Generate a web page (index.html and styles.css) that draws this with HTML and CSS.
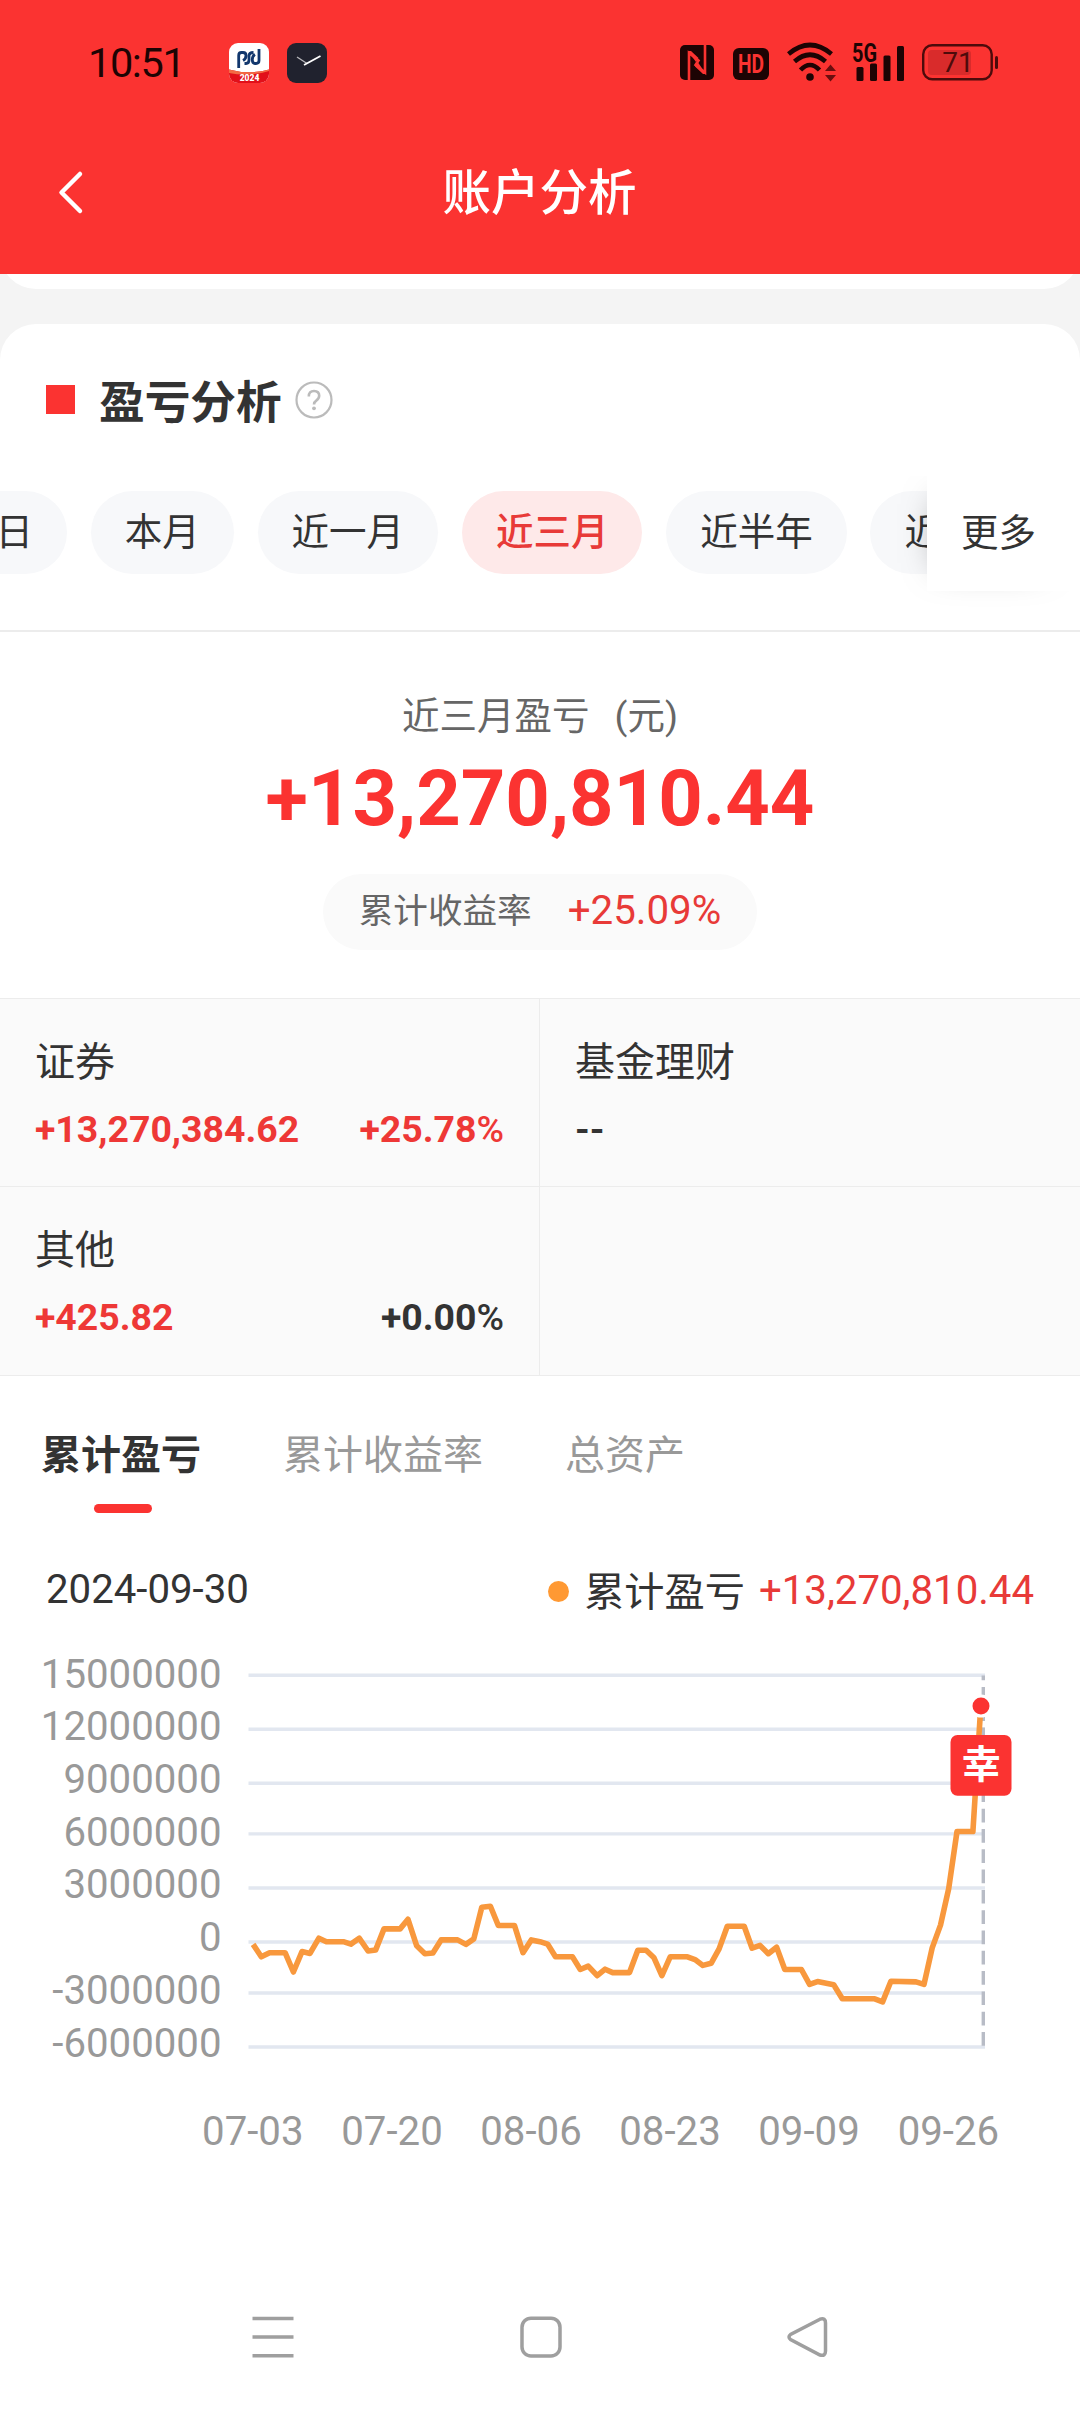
FILE: index.html
```html
<!DOCTYPE html>
<html lang="zh-CN">
<head>
    <meta charset="UTF-8">
    <meta name="viewport" content="width=device-width, initial-scale=1.0">
    <title>账户分析</title>
    <link rel="stylesheet" href="styles.css">
</head>
<body>
    <div class="header">
        <div class="status-bar">
            <div class="time">10:51</div>
            <svg class="app-icon" width="40" height="40" viewBox="0 0 40 40">
                <defs>
                    <clipPath id="app-clip"><rect width="40" height="40" rx="9"/></clipPath>
                </defs>
                <g clip-path="url(#app-clip)">
                    <rect width="40" height="40" fill="#fff"/>
                    <path d="M0 26.500Q20 32 40 26.500V40H0Z" fill="#e2101a"/>
                    <path d="M0 26.500Q20 32 40 26.500V28Q20 34 0 30Z" fill="#f36b45"/>
                    <path d="M9.700 25V12.500Q9.700 9.500 12.500 9.500H14Q17 9.500 17 12.500Q17 16 14 17.500M15.500 20.500H17Q20 20.500 20 17V13Q20 9.500 24.500 9.500M26 11.500Q23.300 13 23.300 16.500Q23.300 20.500 26 20.500H27Q30 20.500 30 17.500V6" fill="none" stroke="#12376d" stroke-width="2.800"/>
                    <text x="20.500" y="38" class="app-year">2024</text>
                </g>
            </svg>
            <svg class="clock-icon" width="40" height="40" viewBox="0 0 40 40">
                <rect width="40" height="40" rx="9" fill="#20222e"/>
                <path d="M10 14L20 20.500" stroke="#b9b9bd" stroke-width="1.300"/>
                <path d="M17 22L33.500 13" stroke="#fff" stroke-width="1.800"/>
            </svg>
            <div class="status-right">
                <svg width="34" height="35" viewBox="0 0 34 35">
                    <rect width="34" height="35" rx="5" fill="#1d0404"/>
                    <path d="M9 35V8L18.500 15.500L15.500 20L25 27.500V0" fill="none" stroke="#fb3331" stroke-width="2.600"/>
                    <path d="M8 6H11L18.500 13L16 17Z" fill="#fb3331"/>
                    <path d="M26 29H23L15 21.500L18 17.500Z" fill="#fb3331"/>
                </svg>
                <svg class="hd" width="36" height="32" viewBox="0 0 36 32">
                    <rect width="36" height="32" rx="6" fill="#1d0404"/>
                    <text x="5" y="25" class="hd-text" textLength="26" lengthAdjust="spacingAndGlyphs">HD</text>
                </svg>
                <svg class="wifi" width="50" height="40" viewBox="0 0 50 40">
                    <g fill="none" stroke="#1d0404" stroke-width="4.600">
                        <path d="M1.500 12Q23 -6 44.500 12"/>
                        <path d="M7.500 19.500Q23 6 38.500 19.500"/>
                        <path d="M13.500 28Q23 18 32.500 28"/>
                    </g>
                    <circle cx="23" cy="35" r="3.800" fill="#1d0404"/>
                    <path d="M38 29L43.500 22.500L49 29ZM38 33L43.500 39.500L49 33Z" fill="#6a0f0f"/>
                </svg>
                <svg class="signal" width="53" height="40" viewBox="0 0 53 40">
                    <text x="0" y="19" class="net-text" textLength="25" lengthAdjust="spacingAndGlyphs">5G</text>
                    <g fill="#1d0404">
                        <rect x="4.500" y="24" width="7" height="14" rx="1.500"/>
                        <rect x="18" y="20.500" width="7" height="17.500" rx="1.500"/>
                        <rect x="31.500" y="12.500" width="7" height="25.500" rx="1.500"/>
                        <rect x="45" y="3" width="7" height="35" rx="1.500"/>
                    </g>
                </svg>
                <svg class="battery" width="76" height="37" viewBox="0 0 76 37">
                    <rect x="6" y="6" width="43" height="25" rx="4" fill="#d92b2b"/>
                    <rect x="1.200" y="1.200" width="68.500" height="34" rx="9" fill="none" stroke="#4d0b0b" stroke-width="2.400"/>
                    <rect x="73" y="12" width="3" height="13" rx="1.500" fill="#4d0b0b"/>
                    <text x="36" y="28" class="battery-text">71</text>
                </svg>
            </div>
        </div>
        <div class="title-bar">
            <svg class="back" width="28" height="46" viewBox="0 0 28 46">
                <path d="M25 5L6.500 23.500L25 42" fill="none" stroke="#fff" stroke-width="4.500" stroke-linecap="round" stroke-linejoin="round"/>
            </svg>
            <div class="page-title">账户分析</div>
        </div>
    </div>

    <div class="prev-card"></div>

    <div class="card">
        <div class="card-head">
            <span class="mark"></span>
            <h2>盈亏分析</h2>
            <svg class="help" width="38" height="38" viewBox="0 0 38 38">
                <circle cx="19" cy="19" r="17.500" fill="none" stroke="#bbb" stroke-width="2.200"/>
                <path d="M13.800 15.500Q13.800 10 19 10Q24.200 10 24.200 14.800Q24.200 17.500 21.500 19.300Q19 21 19 23.500" fill="none" stroke="#bbb" stroke-width="2.600"/>
                <circle cx="19" cy="27.300" r="1.900" fill="#bbb"/>
            </svg>
        </div>

        <div class="range">
            <div class="pills">
                <div class="pill">今日</div>
                <div class="pill">本月</div>
                <div class="pill">近一月</div>
                <div class="pill active">近三月</div>
                <div class="pill">近半年</div>
                <div class="pill">近一年</div>
            </div>
            <div class="more">更多</div>
        </div>

        <div class="summary">
            <div class="summary-label">近三月盈亏<span class="unit">(元)</span></div>
            <div class="summary-value">+13,270,810.44</div>
            <div class="rate">
                <span class="rate-name">累计收益率</span>
                <span class="rate-value">+25.09%</span>
            </div>
        </div>

        <div class="assets">
            <div class="asset">
                <div class="asset-name">证券</div>
                <div class="asset-row red"><span>+13,270,384.62</span><span>+25.78<i>%</i></span></div>
            </div>
            <div class="asset">
                <div class="asset-name">基金理财</div>
                <div class="asset-row"><span>--</span></div>
            </div>
            <div class="asset">
                <div class="asset-name">其他</div>
                <div class="asset-row"><span class="red">+425.82</span><span>+0.00<i>%</i></span></div>
            </div>
            <div class="asset"></div>
        </div>

        <div class="tabs">
            <div class="tab selected">累计盈亏</div>
            <div class="tab">累计收益率</div>
            <div class="tab">总资产</div>
        </div>

        <div class="legend">
            <span class="date">2024-09-30</span>
            <span class="dot"></span>
            <span class="legend-name">累计盈亏</span>
            <span class="legend-value">+13,270,810.44</span>
        </div>

        <svg class="chart" width="1080" height="540" viewBox="0 0 1080 540">
            <path class="grid-line" d="M248.500 35.200H985M248.500 89.200H985M248.500 143.300H985M248.500 193.900H985M248.500 248H985M248.500 302H985M248.500 353H985M248.500 407H985"/>
            <g class="y-axis">
                <text x="221.500" y="47.700">15000000</text>
                <text x="221.500" y="99.700">12000000</text>
                <text x="221.500" y="152.500">9000000</text>
                <text x="221.500" y="205.700">6000000</text>
                <text x="221.500" y="257.500">3000000</text>
                <text x="221.500" y="311">0</text>
                <text x="221.500" y="364">-3000000</text>
                <text x="221.500" y="417.200">-6000000</text>
            </g>
            <path class="cursor-line" d="M983.300 35.500V405.700"/>
            <polyline class="profit-line" points="253.1,304.4 261.3,316.8 269.6,312.7 285.1,312.7 293.4,332 302,311.6 310,313.4 318.9,298.2 326.4,301.7 343.3,301.7 350.9,304.1 359.2,298.2 368.1,311 375.7,309.9 384,288.9 400.1,288.9 408,279.3 416.7,305.8 424.9,313.7 432.9,313 441.1,299.9 457.6,299.9 465.9,304.4 473.8,298.9 481.8,267.2 490.4,266.2 498.3,285.5 514.5,285.5 523,312.7 531.3,299.9 540,301.7 547.6,304.1 555.5,316.8 572.4,316.8 580.3,329.5 588.2,326.1 597.2,335.7 605.1,329.2 612.7,332.6 629.5,332.6 637.8,310.3 646.1,310.3 654,317.8 661.9,335.7 670.2,316.8 687.4,316.8 695,319.6 702.9,325.4 711.1,323.3 719.1,308.9 727.3,286.2 744.2,286.2 752.1,308.2 760,305.4 768.3,313.7 776.6,307.2 784.8,329.5 801.4,329.5 809.6,344.4 817.5,341.6 833.7,344.7 842.3,358.8 874.7,358.8 882.6,361.9 890.9,341.3 916,341.9 924,344.4 932.2,307.9 940.5,285.1 948.7,248.6 957,191.5 972.9,191.5 980.8,66.1"/>
            <circle cx="981" cy="66.100" r="10" class="last-point"/>
            <rect x="950.500" y="95" width="61" height="60.800" rx="7" fill="#fb3331"/>
            <text x="981.300" y="138" class="lucky">幸</text>
            <g class="x-axis">
                <text x="252.800" y="504.500">07-03</text>
                <text x="392" y="504.500">07-20</text>
                <text x="531" y="504.500">08-06</text>
                <text x="670" y="504.500">08-23</text>
                <text x="809" y="504.500">09-09</text>
                <text x="948.400" y="504.500">09-26</text>
            </g>
        </svg>
    </div>

    <div class="nav-bar">
        <svg width="42" height="44" viewBox="0 0 42 44"><path d="M.500 3.500H41.500M.500 22H41.500M.500 40.700H41.500"/></svg>
        <svg width="42" height="44" viewBox="0 0 42 44"><rect x="2" y="3.200" width="38" height="37.800" rx="9"/></svg>
        <svg width="42" height="44" viewBox="0 0 42 44"><path d="M32 4.200L2.500 19.500Q-.500 22 2.500 24.500L32 40Q37.500 41.500 37.500 36V8Q37.500 2.500 32 4.200Z"/></svg>
    </div>
</body>
</html>
```
FILE: styles.css
```css
* {
    box-sizing: border-box;
}
body {
    margin: 0;
    width: 1080px;
    height: 2412px;
    display: flex;
    flex-direction: column;
    overflow: hidden;
    background-color: #f4f4f4;
    color: #333;
    font-family: Roboto, "Noto Sans CJK SC", sans-serif;
}
svg {
    display: block;
    flex: none;
    overflow: visible;
}
.header {
    height: 274px;
    background-color: #fb3331;
}
.status-bar {
    height: 125px;
    display: flex;
    align-items: center;
    padding: 0 82px 0 88px;
}
.time {
    width: 141px;
    font-size: 41.5px;
    letter-spacing: -1.4px;
    color: #1d0404;
}
.clock-icon {
    margin-left: 18px;
}
.app-year {
    font-size: 8.5px;
    font-weight: 900;
    fill: #fff;
    text-anchor: middle;
}
.status-right {
    display: flex;
    align-items: center;
    margin-left: auto;
}
.hd {
    margin: 2px 0 0 19px;
}
.hd-text {
    font-size: 25px;
    font-weight: 700;
    fill: #fb3331;
}
.wifi {
    margin: 0 0 2px 18px;
}
.signal {
    margin: 0 0 0 15px;
}
.net-text {
    font-size: 25px;
    font-weight: 700;
    fill: #1d0404;
}
.battery {
    margin: 0 0 0 17px;
}
.battery-text {
    font-size: 28px;
    fill: #4d0b0b;
    text-anchor: middle;
}
.title-bar {
    height: 134px;
    display: flex;
    align-items: center;
    padding: 0 55px;
}
.page-title {
    flex: 1;
    margin-top: -6px;
    padding-right: 29px;
    text-align: center;
    font-size: 48.5px;
    font-weight: 500;
    color: #fff;
}

.prev-card {
    height: 15px;
    overflow: hidden;
    position: relative;
}
.prev-card::after {
    content: "";
    position: absolute;
    left: 0;
    right: 0;
    bottom: 0;
    height: 80px;
    border-radius: 36px;
    background-color: #fff;
}
.card {
    margin-top: 35px;
    border-radius: 36px 36px 0 0;
    background-color: #fff;
}
.card-head {
    height: 152px;
    display: flex;
    align-items: center;
    padding-left: 46px;
}
.mark {
    width: 29px;
    height: 29px;
    margin-top: -1px;
    background-color: #fb3331;
}
h2 {
    margin: -2px 13px 0 24px;
    font-size: 45.7px;
    font-weight: 700;
}

/* time range */
.range {
    height: 156px;
    display: flex;
    position: relative;
    border-bottom: 2px solid #ececec;
    overflow: hidden;
}
.pills {
    display: flex;
    gap: 23.8px;
    padding-top: 15px;
    margin-left: -76px;
}
.pill {
    height: 83px;
    padding: 0 34px;
    border-radius: 42px;
    line-height: 82px;
    font-size: 37.5px;
    white-space: nowrap;
    background-color: #f7f8fa;
}
.pill.active {
    font-weight: 500;
    color: #e83a38;
    background-color: #fee9e9;
}
.more {
    position: absolute;
    left: 927px;
    right: 0;
    top: 0;
    height: 115px;
    padding-left: 34px;
    line-height: 115px;
    font-size: 37.5px;
    background-color: #fff;
    box-shadow: -14px 0 36px -28px rgba(0, 0, 0, 0.5);
}

/* summary */
.summary {
    height: 366px;
    display: flex;
    flex-direction: column;
    align-items: center;
}
.summary-label {
    margin-top: 56px;
    line-height: 56px;
    font-size: 37.5px;
    color: #666;
}
.unit {
    margin-left: 25px;
}
.summary-value {
    height: 96px;
    margin-top: 7px;
    line-height: 96px;
    font-size: 77.7px;
    font-weight: 700;
    color: #fb3331;
}
.rate {
    height: 76px;
    margin-top: 27px;
    padding: 0 36px;
    display: flex;
    align-items: center;
    gap: 36px;
    border-radius: 38px;
    background-color: #fafafa;
}
.rate-name {
    margin-top: -9px;
    font-size: 34.6px;
    color: #666;
}
.rate-value {
    margin-top: -3px;
    font-size: 40.3px;
    color: #e83a38;
}

.assets {
    display: grid;
    grid-template-columns: 540px 540px;
    grid-template-rows: 188px 189px;
    border-top: 1px solid #ececec;
    background-color: #fafafa;
}
.asset {
    padding: 34px 35px;
    border-right: 1px solid #ececec;
    border-bottom: 1px solid #ececec;
}
.asset:nth-child(even) {
    border-right: none;
}
.asset-name {
    height: 60px;
    line-height: 60px;
    font-size: 40px;
}
.asset-row {
    height: 50px;
    margin-top: 11px;
    display: flex;
    justify-content: space-between;
    line-height: 50px;
    font-size: 37.4px;
    font-weight: 700;
}
.asset-row i {
    font-style: normal;
    font-weight: 500;
}
.red {
    color: #ee3836;
}

.tabs {
    height: 137px;
    display: flex;
    gap: 82px;
    padding: 50px 0 0 41px;
}
.tab {
    height: 87px;
    line-height: 60px;
    font-size: 40px;
    color: #999;
}
.tab.selected {
    position: relative;
    font-weight: 700;
    color: #333;
}
.tab.selected::after {
    content: "";
    position: absolute;
    left: 53px;
    top: 78px;
    width: 58px;
    height: 9px;
    border-radius: 5px;
    background-color: #fb3331;
}

.legend {
    height: 127px;
    display: flex;
    align-items: center;
    padding: 31px 46px 0;
    font-size: 40.2px;
}
.date {
    margin: -5px auto 0 0;
}
.dot {
    width: 21px;
    height: 21px;
    margin-top: -2px;
    border-radius: 50%;
    background-color: #ff9933;
}
.legend-name {
    margin: -8px 14px 0 15px;
}
.legend-value {
    margin-top: -3px;
    color: #e83a38;
}

/* chart */
.grid-line {
    stroke: #e2e7f0;
    stroke-width: 3.4;
    fill: none;
}
.y-axis, .x-axis {
    font-size: 40.2px;
    fill: #999;
}
.y-axis {
    text-anchor: end;
}
.x-axis {
    text-anchor: middle;
}
.cursor-line {
    stroke: #b8bcc6;
    stroke-width: 3.4;
    stroke-dasharray: 13.7 6.6;
    stroke-dashoffset: 8.9;
}
.profit-line {
    fill: none;
    stroke: #f8983d;
    stroke-width: 5.6;
    stroke-linejoin: round;
}
.last-point {
    fill: #fb3331;
    stroke: #fff;
    stroke-width: 3;
}
.lucky {
    font-size: 39px;
    font-weight: 700;
    fill: #fff;
    text-anchor: middle;
}

.nav-bar {
    flex: 1;
    display: flex;
    align-items: center;
    gap: 226px;
    padding: 81px 0 0 252px;
    background-color: #fff;
}
.nav-bar svg {
    fill: none;
    stroke: #9f9f9f;
    stroke-width: 3.5;
}
```
